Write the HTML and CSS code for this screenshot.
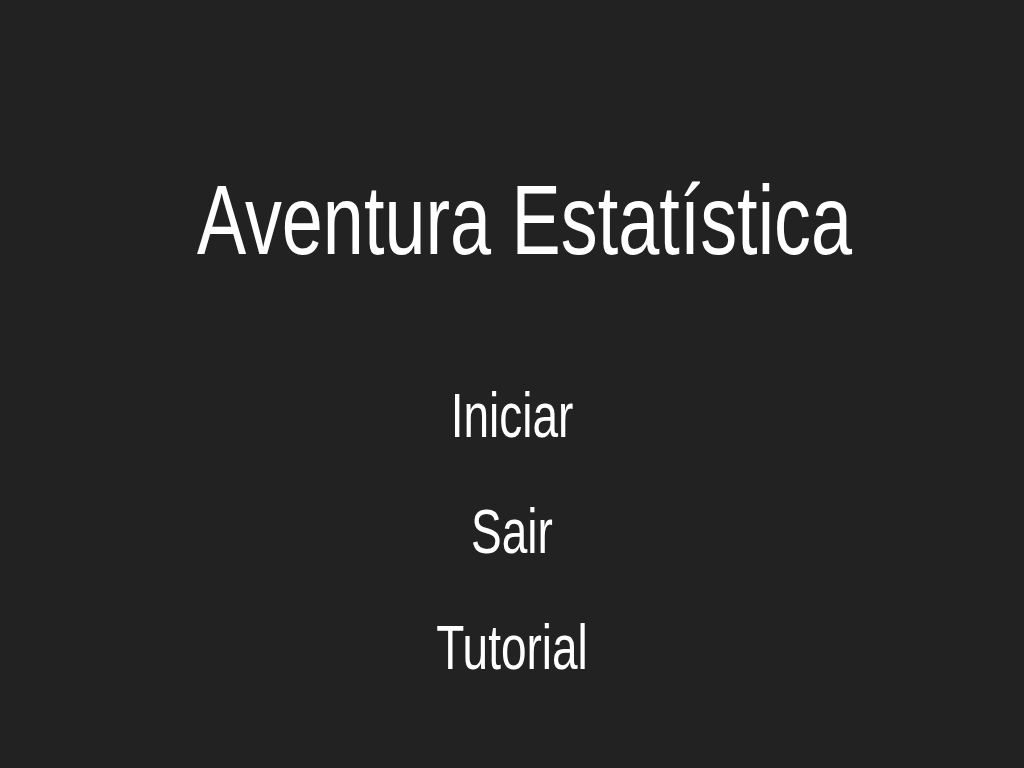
FILE: index.html
```html
<!DOCTYPE html>
<html lang="pt">
<head>
<meta charset="utf-8">
<title>Aventura Estatística</title>
<link rel="stylesheet" href="styles.css">
</head>
<body>
<main class="screen">
  <h1 class="title"><span class="stretch">Aventura Estatística</span></h1>
  <nav class="menu">
    <a class="menu-item"><span class="stretch">Iniciar</span></a>
    <a class="menu-item"><span class="stretch">Sair</span></a>
    <a class="menu-item"><span class="stretch">Tutorial</span></a>
  </nav>
</main>
</body>
</html>
```
FILE: styles.css
```css
html, body {
  margin: 0;
  padding: 0;
  background: #222222;
}
body {
  width: 1024px;
  height: 768px;
  overflow: hidden;
  font-family: "Liberation Sans", Arial, sans-serif;
  color: #ffffff;
}
.screen {
  display: flex;
  flex-direction: column;
  align-items: center;
  padding-top: 171px;
}
.title {
  margin: 0;
  font-weight: normal;
  font-size: 73.8px;
  line-height: 100px;
  height: 100px;
  padding-left: 25px;
  white-space: nowrap;
}
.title .stretch {
  display: inline-block;
  transform: scaleY(1.33);
}
.menu {
  display: flex;
  flex-direction: column;
  align-items: center;
  gap: 56px;
  margin-top: 114px;
}
.menu-item {
  display: block;
  font-size: 46px;
  line-height: 60px;
  height: 60px;
  cursor: pointer;
  white-space: nowrap;
}
.menu-item .stretch {
  display: inline-block;
  transform: scaleY(1.36);
}
```
